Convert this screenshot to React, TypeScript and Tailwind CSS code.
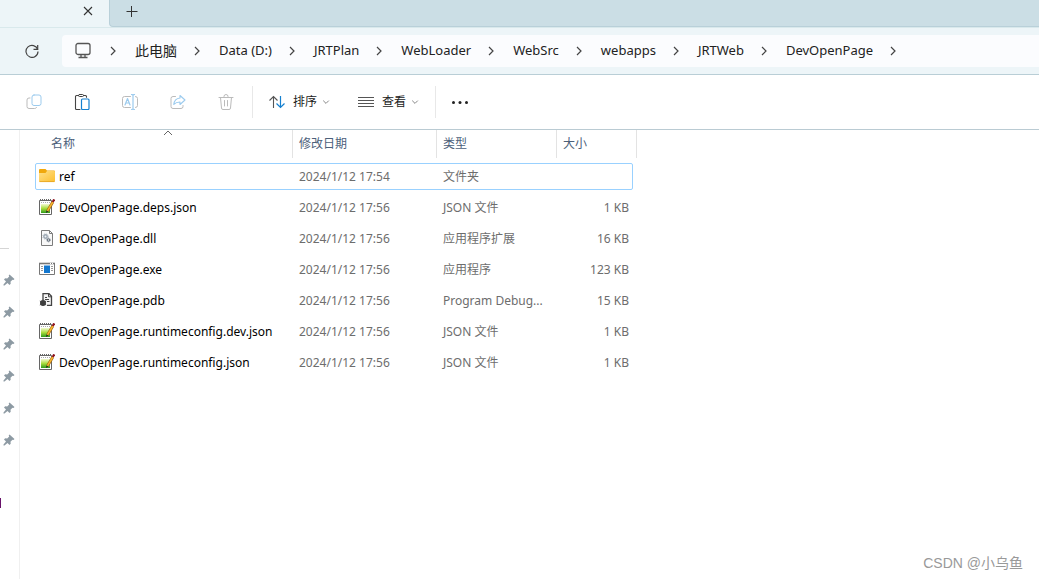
import type { ReactNode } from "react";

type FileKind = "folder" | "json" | "dll" | "exe" | "pdb";

type FileEntry = {
  name: string;
  kind: FileKind;
  modified: string;
  type: string;
  size: string;
};

const crumbs = [
  "Data (D:)",
  "JRTPlan",
  "WebLoader",
  "WebSrc",
  "webapps",
  "JRTWeb",
  "DevOpenPage",
];

const files: FileEntry[] = [
  { name: "ref", kind: "folder", modified: "2024/1/12 17:54", type: "文件夹", size: "" },
  { name: "DevOpenPage.deps.json", kind: "json", modified: "2024/1/12 17:56", type: "JSON 文件", size: "1 KB" },
  { name: "DevOpenPage.dll", kind: "dll", modified: "2024/1/12 17:56", type: "应用程序扩展", size: "16 KB" },
  { name: "DevOpenPage.exe", kind: "exe", modified: "2024/1/12 17:56", type: "应用程序", size: "123 KB" },
  { name: "DevOpenPage.pdb", kind: "pdb", modified: "2024/1/12 17:56", type: "Program Debug...", size: "15 KB" },
  { name: "DevOpenPage.runtimeconfig.dev.json", kind: "json", modified: "2024/1/12 17:56", type: "JSON 文件", size: "1 KB" },
  { name: "DevOpenPage.runtimeconfig.json", kind: "json", modified: "2024/1/12 17:56", type: "JSON 文件", size: "1 KB" },
];

const pins = [1, 2, 3, 4, 5, 6];

function Chevron() {
  return (
    <svg className="h-3 w-3 shrink-0" viewBox="0 0 12 12" fill="none" stroke="#444" strokeWidth="1.2">
      <path d="M4 2l4 4-4 4" />
    </svg>
  );
}

function ChevronDown() {
  return (
    <svg className="h-2 w-2 shrink-0" viewBox="0 0 8 8" fill="none" stroke="#888" strokeWidth="1">
      <path d="M1.2 2.6L4 5.4l2.8-2.8" />
    </svg>
  );
}

function FileIcon({ kind }: { kind: FileKind }) {
  if (kind === "folder") {
    return (
      <svg className="mb-px h-4 w-4 shrink-0" viewBox="0 0 16 16">
        <defs>
          <linearGradient id="folder" x1="0" y1="0" x2="1" y2="1">
            <stop offset="0" stopColor="#ffe08a" />
            <stop offset="1" stopColor="#fcc030" />
          </linearGradient>
        </defs>
        <path d="M0 2A1 1 0 0 1 1 1h5.500L8 2.500h7a1 1 0 0 1 1 1v3H0z" fill="#f0a80c" />
        <path d="M0 5h6.500L8 3h7a1 1 0 0 1 1 1v9a1 1 0 0 1-1 1H1a1 1 0 0 1-1-1z" fill="url(#folder)" />
        <path d="M.5 13.600h15" stroke="#e5a21e" strokeWidth=".8" />
      </svg>
    );
  }
  if (kind === "json") {
    return (
      <svg className="mb-px h-4 w-4 shrink-0" viewBox="0 0 16 16">
        <defs>
          <linearGradient id="note" x1="0" y1="0" x2="0" y2="1">
            <stop offset="0" stopColor="#f4fbd0" />
            <stop offset=".5" stopColor="#a6dc3c" />
            <stop offset="1" stopColor="#2f9a1c" />
          </linearGradient>
        </defs>
        <path d="M.5 1.500h12v14H.5z" fill="#fff" stroke="#666" />
        <path d="M2 5h9v9H2z" fill="url(#note)" />
        <path d="M1 1h11" stroke="#666" strokeWidth="2" strokeDasharray="1 1" />
        <path d="M2 3.500h10" stroke="#aaa" strokeDasharray="1 1" />
        <path d="M8.500 12l5.300-9" stroke="#9a6414" strokeWidth="2.800" />
        <path d="M8.500 11.800l5.300-8.800" stroke="#f8b42c" strokeWidth="1.600" />
        <path d="M7 14l.5-2.600 1.800 1z" fill="#222" />
        <path d="M13.700 3L15.200.4" stroke="#8e1420" strokeWidth="2.200" />
      </svg>
    );
  }
  if (kind === "dll") {
    return (
      <svg className="mb-px h-4 w-4 shrink-0" viewBox="0 0 16 16">
        <path d="M2.500.5h8l3 3v12h-11z" fill="#f8f8f8" stroke="#7c7c7c" />
        <path d="M10.500.5v3h3" fill="none" stroke="#7c7c7c" />
        <circle cx="6.500" cy="6.500" r="1.700" fill="#eef1f4" stroke="#9aa5b0" strokeWidth="1.400" />
        <circle cx="6.500" cy="6.500" r="2.700" fill="none" stroke="#a5afb9" strokeWidth=".8" strokeDasharray="1.100 1.100" />
        <circle cx="9.500" cy="10" r="1.200" fill="#eee" stroke="#66717d" strokeWidth="1.100" />
        <circle cx="9.500" cy="10" r="2" fill="none" stroke="#7a8591" strokeWidth=".7" strokeDasharray="1 1" />
      </svg>
    );
  }
  if (kind === "exe") {
    return (
      <svg className="mb-px h-4 w-4 shrink-0" viewBox="0 0 16 16">
        <path d="M.5 2.500h15v11H.5z" fill="#fff" stroke="#777" />
        <path d="M0 2.500h16" stroke="#777" strokeWidth="1.600" />
        <path d="M11 2.500h1M13 2.500h1" stroke="#fff" />
        <path d="M2 5.500h2M2 7.500h2M2 9.500h2M12 5.500h2M12 7.500h2M12 9.500h2" stroke="#999" />
        <path d="M5 4.500h6V12H5z" fill="#1277cf" />
      </svg>
    );
  }
  return (
    <svg className="mb-px h-4 w-4 shrink-0" viewBox="0 0 16 16">
      <path d="M4 8V1.700h6l2.500 2.600v9H8" fill="#f5f5f5" stroke="#444" strokeWidth="1.300" />
      <path d="M9.500 2v2.800h2.800" fill="none" stroke="#444" />
      <path d="M6 5.500h2M6 7.500h4M8 9.500h2.500" stroke="#444" />
      <circle cx="4" cy="11" r="3" fill="#3f3f3f" />
      <path d="M.8 9l6.400 4M.8 13l6.400-4M4 7.500V14" stroke="#3f3f3f" strokeWidth=".8" />
    </svg>
  );
}

function ToolButton({ label, children }: { label: string; children: ReactNode }) {
  return (
    <button type="button" aria-label={label} className="flex h-8 w-12 items-center justify-center">
      <svg className="h-4 w-4" viewBox="0 0 16 16" fill="none" strokeLinejoin="round" strokeLinecap="round">
        {children}
      </svg>
    </button>
  );
}

function TabStrip() {
  return (
    <div className="flex h-7 border-b border-[#d9e9ec] bg-[#edf5f8]">
      <div className="flex w-[109px] shrink-0 items-center justify-end pr-[15px] pb-1.5">
        <button type="button" aria-label="关闭标签页" className="flex h-3 w-3 items-center justify-center">
          <svg className="h-3 w-3" viewBox="0 0 12 12" stroke="#333" strokeWidth="1.100">
            <path d="M2 2l8 8M10 2l-8 8" />
          </svg>
        </button>
      </div>
      <div className="flex flex-1 items-center rounded-bl border-b border-l border-[#b9d0d9] bg-[#cbdee5] pb-1 pl-4">
        <button type="button" aria-label="新建标签页" className="flex h-3 w-3 items-center justify-center">
          <svg className="h-3 w-3" viewBox="0 0 12 12" stroke="#333" strokeWidth="1">
            <path d="M.5 6.500h11M5.500 1v11" />
          </svg>
        </button>
      </div>
    </div>
  );
}

function AddressBar() {
  return (
    <div className="flex h-[47px] items-center border-b border-[#b9ced6] bg-[#edf5f8]">
      <button type="button" aria-label="刷新" className="flex h-8 w-[62px] shrink-0 items-center justify-center pl-0.5">
        <svg className="h-3.5 w-3.5" viewBox="0 0 14 14" fill="none" stroke="#444" strokeWidth="1.200">
          <path d="M12.700 5.500A6 6 0 1 0 13 7.500" />
          <path d="M12.700 1v4.300H8.500" />
        </svg>
      </button>
      <nav
        aria-label="地址"
        className="flex h-8 flex-1 items-center overflow-hidden rounded-l bg-[#fbfcfe] pl-3 text-[13px] whitespace-nowrap text-[#222]"
      >
        <svg className="mr-[15px] h-[18px] w-[18px] shrink-0" viewBox="0 0 18 18" fill="none" stroke="#555" strokeWidth="1.300">
          <rect x="2" y="1.500" width="14" height="11" rx="2" />
          <path d="M7 12.500v3M11 12.500v3M4.500 15.500h9" />
        </svg>
        <Chevron />
        <button type="button" className="mr-3.5 ml-4 shrink-0 text-sm">
          此电脑
        </button>
        <Chevron />
        {crumbs.map((crumb) => (
          <div key={crumb} className="flex shrink-0 items-center">
            <button type="button" className="mr-3.5 ml-4">
              {crumb}
            </button>
            <Chevron />
          </div>
        ))}
      </nav>
    </div>
  );
}

function Toolbar() {
  return (
    <div className="flex h-[55px] items-center border-b border-[#bacbd3] bg-white pl-2.5 text-xs text-[#222]">
      <ToolButton label="复制">
        <rect x="6" y="1" width="9" height="10.500" rx="2" stroke="#9ccbee" />
        <path d="M4 4H3a2 2 0 0 0-2 2v6.500a2 2 0 0 0 2 2h5.500a2 2 0 0 0 2-1" stroke="#bbb" />
      </ToolButton>
      <ToolButton label="粘贴">
        <path d="M4.500 1.500h-2a1 1 0 0 0-1 1v12a1 1 0 0 0 1 1h3.500M9.500 1.500h2a1 1 0 0 1 1 1v.8" stroke="#444" strokeWidth="1.100" />
        <rect x="4.500" y=".5" width="5" height="2" rx="1" stroke="#444" />
        <rect x="7.500" y="5" width="7.500" height="10.500" rx="1" stroke="#1480d0" strokeWidth="1.200" />
      </ToolButton>
      <ToolButton label="重命名">
        <path d="M8.500 2.500H2.500a2 2 0 0 0-2 2v7a2 2 0 0 0 2 2h6M13.500 2.500a2 2 0 0 1 2 2v7a2 2 0 0 1-2 2" stroke="#bbb" />
        <path d="M3 11l2.500-6.500L8 11M4 9h3M11 1v14M9.500.5c.8 0 1.500.2 1.500 1 0-.8.700-1 1.500-1M9.500 15.500c.8 0 1.500-.2 1.500-1 0 .8.700 1 1.500 1" stroke="#9ccbee" strokeWidth="1.200" />
      </ToolButton>
      <ToolButton label="共享">
        <path d="M5.500 2.500H3a2 2 0 0 0-2 2v8a2 2 0 0 0 2 2h8a2 2 0 0 0 2-2v-1" stroke="#bbb" />
        <path d="M10 1.500l5 4.500-5 4.500V8C7 8 5.500 8.500 3.800 10.500 4.200 6.500 6.500 4.300 10 4z" stroke="#9ccbee" strokeWidth="1.100" />
      </ToolButton>
      <ToolButton label="删除">
        <path d="M1 3.500h14M6 3V2.500a2 2 0 0 1 4 0V3M2.500 3.500l1 10.500a1.500 1.500 0 0 0 1.500 1.500h6a1.500 1.500 0 0 0 1.500-1.500l1-10.500M6.500 6.500v5.500M9.500 6.500v5.500" stroke="#bbb" />
      </ToolButton>
      <div className="mx-0.5 h-8 w-px bg-[#e8e8e8]" />
      <button type="button" className="ml-3.5 flex h-8 items-center whitespace-nowrap">
        <svg className="mr-2 h-4 w-4" viewBox="0 0 16 16" fill="none">
          <path d="M4.500 14V2.500M.5 6.500l4-4 4 4" stroke="#555" strokeWidth="1.100" />
          <path d="M11.500 2v11.500M7.500 9.500l4 4 4-4" stroke="#1480d0" strokeWidth="1.200" />
        </svg>
        <span className="mr-[5px]">排序</span>
        <ChevronDown />
      </button>
      <button type="button" className="ml-7 flex h-8 items-center whitespace-nowrap">
        <svg className="mr-2 h-4 w-4" viewBox="0 0 16 16" stroke="#555">
          <path d="M0 3.500h16M0 6.500h16M0 9.500h16M0 12.500h16" />
        </svg>
        <span className="mr-[5px]">查看</span>
        <ChevronDown />
      </button>
      <div className="ml-4 h-8 w-px bg-[#e8e8e8]" />
      <button type="button" aria-label="更多" className="flex h-8 w-12 items-center justify-center">
        <svg className="h-4 w-4" viewBox="0 0 16 16" fill="#222">
          <circle cx="1.500" cy="8.500" r="1.500" />
          <circle cx="8" cy="8.500" r="1.500" />
          <circle cx="14.500" cy="8.500" r="1.500" />
        </svg>
      </button>
    </div>
  );
}

function Sidebar() {
  return (
    <aside className="flex w-5 shrink-0 flex-col border-r border-[#f0f0f0] pt-[118px]">
      <div className="h-px w-[9px] bg-[#d5d5d5]" />
      <ul className="pt-[15px]">
        {pins.map((pin) => (
          <li key={pin} className="flex h-8 items-center pl-[3px]">
            <svg className="h-3 w-3" viewBox="0 0 12 12" fill="#8d9aa3">
              <path d="M6.500.5l5 4.500-1 1-1-.2-2 2 .2 2-1.200 1.200-2-2L1.500 11.500.5 11.500V10.500L3 7.500l-2-2 1.200-1.200 2 .2 2-2-.5-1z" />
            </svg>
          </li>
        ))}
      </ul>
      <div className="mt-[42px] h-2.5 w-px bg-[#68126a]" />
    </aside>
  );
}

function FileTable() {
  return (
    <table className="block w-[602px] text-xs text-[#6d6d6d]">
      <thead className="block text-[#4c607a]">
        <tr className="grid h-7 grid-cols-[258px_144px_120px_80px]">
          <th className="relative flex items-center border-r border-[#e3e3e3] pl-4 font-normal">
            名称
            <svg className="absolute top-0 left-32 h-1.5 w-2.5" viewBox="0 0 10 6" fill="none" stroke="#666">
              <path d="M1 5l4-4 4 4" />
            </svg>
          </th>
          <th className="flex items-center border-r border-[#e3e3e3] pl-1.5 font-normal">修改日期</th>
          <th className="flex items-center border-r border-[#e3e3e3] pl-1.5 font-normal">类型</th>
          <th className="flex items-center border-r border-[#e3e3e3] pl-1.5 font-normal">大小</th>
        </tr>
      </thead>
      <tbody className="mt-[5px] mr-1 flex flex-col gap-1">
        {files.map((file) => (
          <tr
            key={file.name}
            className={
              file.kind === "folder"
                ? "grid h-[27px] grid-cols-[257px_144px_120px_1fr] rounded-xs border border-[#99d1ff]"
                : "grid h-[27px] grid-cols-[257px_144px_120px_1fr] border border-transparent"
            }
          >
            <td className="flex items-center gap-1 pl-[3px] whitespace-nowrap text-black">
              <FileIcon kind={file.kind} />
              {file.name}
            </td>
            <td className="flex items-center pl-1.5 whitespace-nowrap">{file.modified}</td>
            <td className="flex items-center pl-1.5 whitespace-nowrap">{file.type}</td>
            <td className="flex items-center justify-end pr-[3px] whitespace-nowrap">{file.size}</td>
          </tr>
        ))}
      </tbody>
    </table>
  );
}

function App() {
  return (
    <div className="relative flex min-h-screen flex-col bg-white font-['Noto_Sans','Noto_Sans_CJK_SC',sans-serif]">
      <TabStrip />
      <AddressBar />
      <Toolbar />
      <div className="flex flex-1">
        <Sidebar />
        <main className="flex-1 pl-[15px]">
          <FileTable />
        </main>
      </div>
      <div className="absolute right-4 bottom-1.5 font-['Liberation_Sans','Noto_Sans_CJK_SC',sans-serif] text-sm text-[#999]">
        CSDN @小乌鱼
      </div>
    </div>
  );
}

export default App;
